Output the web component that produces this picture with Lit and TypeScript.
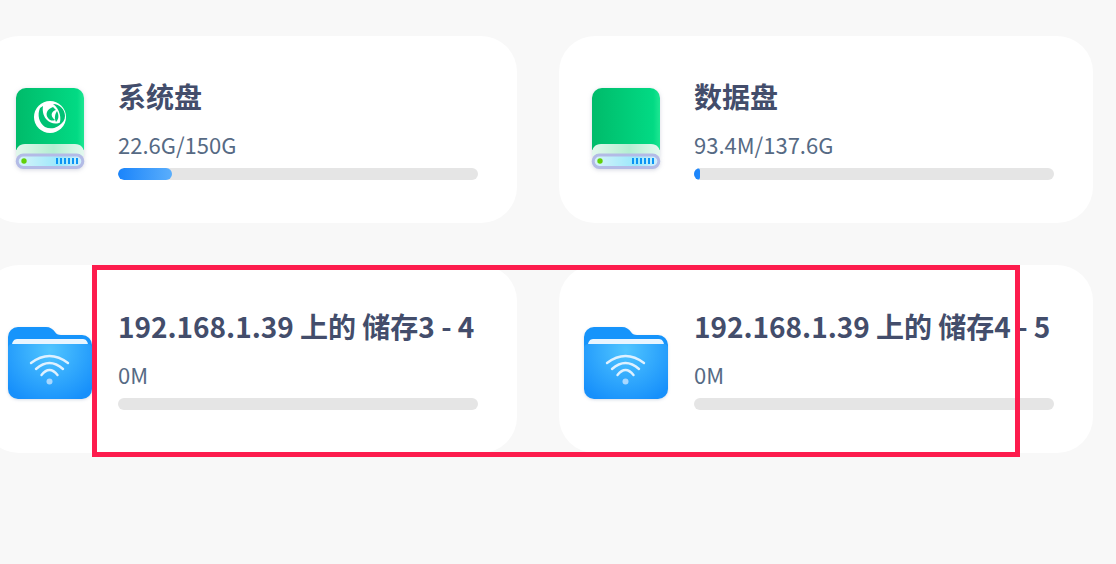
import { LitElement, html, css, svg } from "lit";
import { customElement } from "lit/decorators.js";

const driveIcon = (id: string, logo: boolean) => html`<svg class="drive" width="76" height="88" viewBox="0 0 76 88">
  <defs>
    <linearGradient id="body${id}" x1="0" x2="1" y1="0" y2="0"><stop offset="0" stop-color="#00bb6a"/><stop offset=".9" stop-color="#02da84"/><stop offset="1" stop-color="#1ee692"/></linearGradient>
    <linearGradient id="ledge${id}" x1="0" x2="1" y1="0" y2="0"><stop offset="0" stop-color="#e2f7ec"/><stop offset=".55" stop-color="#b4eed2"/><stop offset="1" stop-color="#e4f8ef"/></linearGradient>
    <linearGradient id="base${id}" x1="0" x2="1" y1="0" y2="0"><stop offset="0" stop-color="#d8f3f8"/><stop offset=".65" stop-color="#9ae8fc"/><stop offset="1" stop-color="#d4f0fb"/></linearGradient>
  </defs>
  <path d="M4 62V14a10 10 0 0 1 10-10h48a10 10 0 0 1 10 10v52H4z" fill="url(#body${id})"/>
  <path d="M4 72v-3c0-5 3-9 9-9h50c6 0 9 4 9 9v3z" fill="url(#ledge${id})"/>
  <rect x="5.200" y="71" width="65.600" height="12.500" rx="6.200" fill="url(#base${id})" stroke="#b3bbe6" stroke-width="3"/>
  <circle cx="12" cy="77" r="2.700" fill="#62d008"/>
  ${[44, 48, 52, 56, 60, 64].map((x) => svg`<rect x="${x}" y="74" width="2" height="6" fill="#0c95f5"/>`)}
  ${logo
    ? svg`<circle cx="38" cy="33" r="16" fill="#fff"/>
      <path d="M28 24C25 31 27 39 33 43C39 46 47 44 51 37C45 41 39 40 35 36C32 33 30 28 31 22z" fill="#00c274"/>
      <path d="M41 20C48 20 53 26 53 32C53 36 51 39 47 41C50 35 48 25 41 20z" fill="#00c274"/>
      <path d="M41 23C35 25 33 30 36 34C38 37 41 37 43 36C40 34 39 31 40 29C41 27 43 26 44 26z" fill="#00c274"/>
      <path d="M45 27C47 31 47 35 44 38C42 34 43 30 45 27z" fill="#00c274"/>`
    : ""}
</svg>`;

const folderIcon = (id: string) => html`<svg class="folder" width="84" height="74" viewBox="0 0 84 74">
  <defs>
    <radialGradient id="f${id}" gradientUnits="userSpaceOnUse" cx="42" cy="24" r="56"><stop offset="0" stop-color="#50c5ff"/><stop offset="1" stop-color="#1790fb"/></radialGradient>
  </defs>
  <path d="M0 11a10 10 0 0 1 10-10h28c4 0 7 2 9 5 1 2 3 3 6 3h21a10 10 0 0 1 10 10v10H0z" fill="#1694fb"/>
  <path d="M4 19c0-3 2-6 5-6h66c3 0 5 3 5 6v3H4z" fill="#e8f5ff"/>
  <path d="M0 22c0-3 2-4 4-4h76c2 0 4 1 4 4v41a10 10 0 0 1-10 10H10a10 10 0 0 1-10-10z" fill="url(#f${id})"/>
  <g fill="none" stroke="#dff1ff" stroke-width="2.400" stroke-linecap="round">
    <path d="M23 37Q41.500 23 60 37"/>
    <path d="M28 43Q41.500 31 55 43"/>
    <path d="M33.500 49Q41.500 39 49.500 49"/>
  </g>
  <circle cx="41.500" cy="55.500" r="3" fill="#a8d8ff"/>
</svg>`;

interface Disk { title: string; sub: string; pct: number; kind: string; logo?: boolean }

const DISKS: Disk[] = [
  { title: "系统盘", sub: "22.6G/150G", pct: 15, kind: "drive", logo: true },
  { title: "数据盘", sub: "93.4M/137.6G", pct: 1.7, kind: "drive" },
  { title: "192.168.1.39 上的 储存3 - 4", sub: "0M", pct: 0, kind: "folder" },
  { title: "192.168.1.39 上的 储存4 - 5", sub: "0M", pct: 0, kind: "folder" },
];

@customElement("app-root")
export class AppRoot extends LitElement {
  static styles = css`
    :host {
      display: block;
      position: relative;
      width: 1116px;
      height: 564px;
      overflow: hidden;
      background: #f8f8f8;
      font-family: "Noto Sans CJK SC", "Noto Sans", sans-serif;
    }
    .grid {
      display: grid;
      grid-template-columns: 534px 534px;
      grid-auto-rows: 187.4px;
      column-gap: 42px;
      row-gap: 42.2px;
      padding: 35.8px 0 0;
      margin-left: -17px;
      width: 1110px;
    }
    .card {
      background: #fff;
      border-radius: 36px;
      display: grid;
      grid-template-columns: 135px 360px;
      align-items: start;
    }
    .icon {
      display: flex;
      justify-content: center;
      padding: 48.2px 2px 0 0;
    }
    .icon.folder-wrap {
      padding-top: 60.6px;
    }
    .drive {
      filter: drop-shadow(0 1px 2px rgba(90, 100, 140, 0.25));
    }
    .folder {
      filter: drop-shadow(0 1px 1.5px rgba(60, 90, 140, 0.2));
    }
    .info {
      display: flex;
      flex-direction: column;
    }
    .title {
      font-size: 28px;
      font-weight: 700;
      line-height: 40px;
      color: #434d6b;
      white-space: nowrap;
      margin-top: 40.4px;
      letter-spacing: -0.02px;
    }
    .sub {
      font-size: 22px;
      line-height: 30px;
      color: #566a84;
      margin-top: 13.2px;
      white-space: nowrap;
    }
    .track {
      height: 12px;
      border-radius: 6px;
      background: #e5e5e5;
      margin-top: 8.8px;
      overflow: hidden;
    }
    .fill {
      height: 100%;
      border-radius: 6px;
      background: linear-gradient(90deg, #1a84fb, #5aaefc) 0 0 / 54px 100% no-repeat;
    }
    .mark {
      position: absolute;
      left: 91.7px;
      top: 265.4px;
      width: 928.8px;
      height: 191.2px;
      box-sizing: border-box;
      border: 5px solid #fd1c4d;
      pointer-events: none;
    }
  `;

  render() {
    return html`<div class="grid">
        ${DISKS.map(
          (d, i) => html`<div class="card">
            <div class="icon ${d.kind === "folder" ? "folder-wrap" : ""}">
              ${d.kind === "folder" ? folderIcon(String(i)) : driveIcon(String(i), !!d.logo)}
            </div>
            <div class="info">
              <div class="title">${d.title}</div>
              <div class="sub">${d.sub}</div>
              <div class="track"><div class="fill" style="width:${d.pct}%"></div></div>
            </div>
          </div>`
        )}
      </div>
      <div class="mark"></div>`;
  }
}
